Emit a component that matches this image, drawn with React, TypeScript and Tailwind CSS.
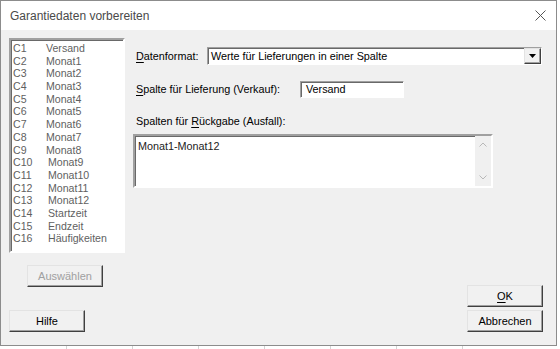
import React from 'react';

// Spaltenliste links
const columns: [string, string][] = [
  ['C1', 'Versand'],
  ['C2', 'Monat1'],
  ['C3', 'Monat2'],
  ['C4', 'Monat3'],
  ['C5', 'Monat4'],
  ['C6', 'Monat5'],
  ['C7', 'Monat6'],
  ['C8', 'Monat7'],
  ['C9', 'Monat8'],
  ['C10', 'Monat9'],
  ['C11', 'Monat10'],
  ['C12', 'Monat11'],
  ['C13', 'Monat12'],
  ['C14', 'Startzeit'],
  ['C15', 'Endzeit'],
  ['C16', 'Häufigkeiten'],
];

const font = "font-['Liberation_Sans',Arial,sans-serif]";

const raised =
  'border border-t-[#e3e3e3] border-l-[#e3e3e3] border-b-[#404040] border-r-[#404040] shadow-[inset_-1px_-1px_0_#a0a0a0] bg-[#f1f1f1]';
const sunken =
  'border border-t-[#a0a0a0] border-l-[#a0a0a0] border-b-[#ffffff] border-r-[#ffffff] shadow-[inset_1px_1px_0_#696969] bg-white';

function Button({ children, disabled, className = '' }: { children: React.ReactNode; disabled?: boolean; className?: string }) {
  return (
    <div
      className={`${raised} w-[76px] h-[22px] flex items-center justify-center text-[11px] ${
        disabled ? 'text-[#a0a0a0]' : 'text-black'
      } ${className}`}
    >
      {children}
    </div>
  );
}

export default function App() {
  return (
    <div className={`w-[560px] h-[349px] bg-white ${font} overflow-hidden`}>
      <div className="w-[557px] h-[346px] border border-[#8c8c8c] flex flex-col">
        {/* Titelleiste */}
        <div className="h-[29px] bg-white flex items-center justify-between pl-[9px] pr-[9px] shrink-0">
          <span className="text-[12px] text-[#4a4a4a]">Garantiedaten vorbereiten</span>
          <svg width="11" height="11" viewBox="0 0 11 11" className="mr-[1px]">
            <path d="M0.5 0.5 L10.5 10.5 M10.5 0.5 L0.5 10.5" stroke="#555" strokeWidth="1" />
          </svg>
        </div>

        {/* Inhalt */}
        <div className="flex-1 bg-[#f0f0f0] flex">
          {/* linke Spalte */}
          <div className="flex flex-col pl-[8px] pt-[8px] pb-[13px]">
            <div className={`w-[116px] h-[215px] ${sunken} border-2 pt-[2px] pl-[2px]`}>
              {columns.map(([c, name], i) => (
                <div key={c} className="flex h-[12.7px] leading-[12.7px] text-[10.6px] text-[#5f5f5f]">
                  <span className={i < 9 ? 'w-[33px]' : 'w-[35px]'}>{c}</span>
                  <span>{name}</span>
                </div>
              ))}
            </div>
            <Button disabled className="ml-[18px] mt-[12px]">
              Auswählen
            </Button>
            <Button className="mt-auto">Hilfe</Button>
          </div>

          {/* rechte Spalte */}
          <div className="flex-1 flex flex-col ml-[8px] pt-[17px] pb-[13px] pr-[13px] text-[10.8px] text-black">
            <div className="flex items-center h-[18px]">
              <span className="w-[74px] pl-[3px]">
                <span className="underline underline-offset-2">D</span>atenformat:
              </span>
              <div className={`w-[335px] h-[18px] ${sunken} flex items-center`}>
                <span className="flex-1 pl-[3px] leading-none">Werte für Lieferungen in einer Spalte</span>
                <div className={`${raised} w-[17px] h-full flex items-center justify-center`}>
                  <svg width="7" height="4" viewBox="0 0 7 4">
                    <path d="M0 0 H7 L3.5 4 Z" fill="#000" />
                  </svg>
                </div>
              </div>
            </div>

            <div className="flex items-center h-[17px] mt-[16px]">
              <span className="w-[167px] pl-[3px]">
                <span className="underline underline-offset-2">S</span>palte für Lieferung (Verkauf):
              </span>
              <div className={`w-[104px] h-[17px] ${sunken} pl-[5px] flex items-center`}>Versand</div>
            </div>

            <div className="mt-[16px] pl-[3px] leading-[14px]">
              Spalten für <span className="underline underline-offset-2">R</span>ückgabe (Ausfall):
            </div>

            <div className={`mt-[6px] w-[360px] h-[54px] ${sunken} border-2 flex`}>
              <div className="flex-1 pl-[3px] pt-[2px] text-[#222]">Monat1-Monat12</div>
              <div className="w-[16px] bg-[#f0f0f0] flex flex-col justify-between items-center py-[6px]">
                <svg width="8" height="5" viewBox="0 0 8 5">
                  <path d="M0.5 4.5 L4 1 L7.5 4.5" stroke="#b8b8b8" fill="none" />
                </svg>
                <svg width="8" height="5" viewBox="0 0 8 5">
                  <path d="M0.5 0.5 L4 4 L7.5 0.5" stroke="#b8b8b8" fill="none" />
                </svg>
              </div>
            </div>

            <div className="mt-auto flex flex-col items-end gap-[3px]">
              <Button>
                <span className="underline underline-offset-2">O</span>K
              </Button>
              <Button>Abbrechen</Button>
            </div>
          </div>
        </div>
      </div>
      <div className="flex h-[3px] ml-[66px] gap-[65px]">
        <div className="w-px bg-[#d4d4d4]" />
        <div className="w-px bg-[#d4d4d4]" />
        <div className="w-px bg-[#d4d4d4]" />
        <div className="w-px bg-[#d4d4d4]" />
        <div className="w-px bg-[#d4d4d4]" />
        <div className="w-px bg-[#d4d4d4]" />
        <div className="w-px bg-[#d4d4d4]" />
      </div>
    </div>
  );
}
